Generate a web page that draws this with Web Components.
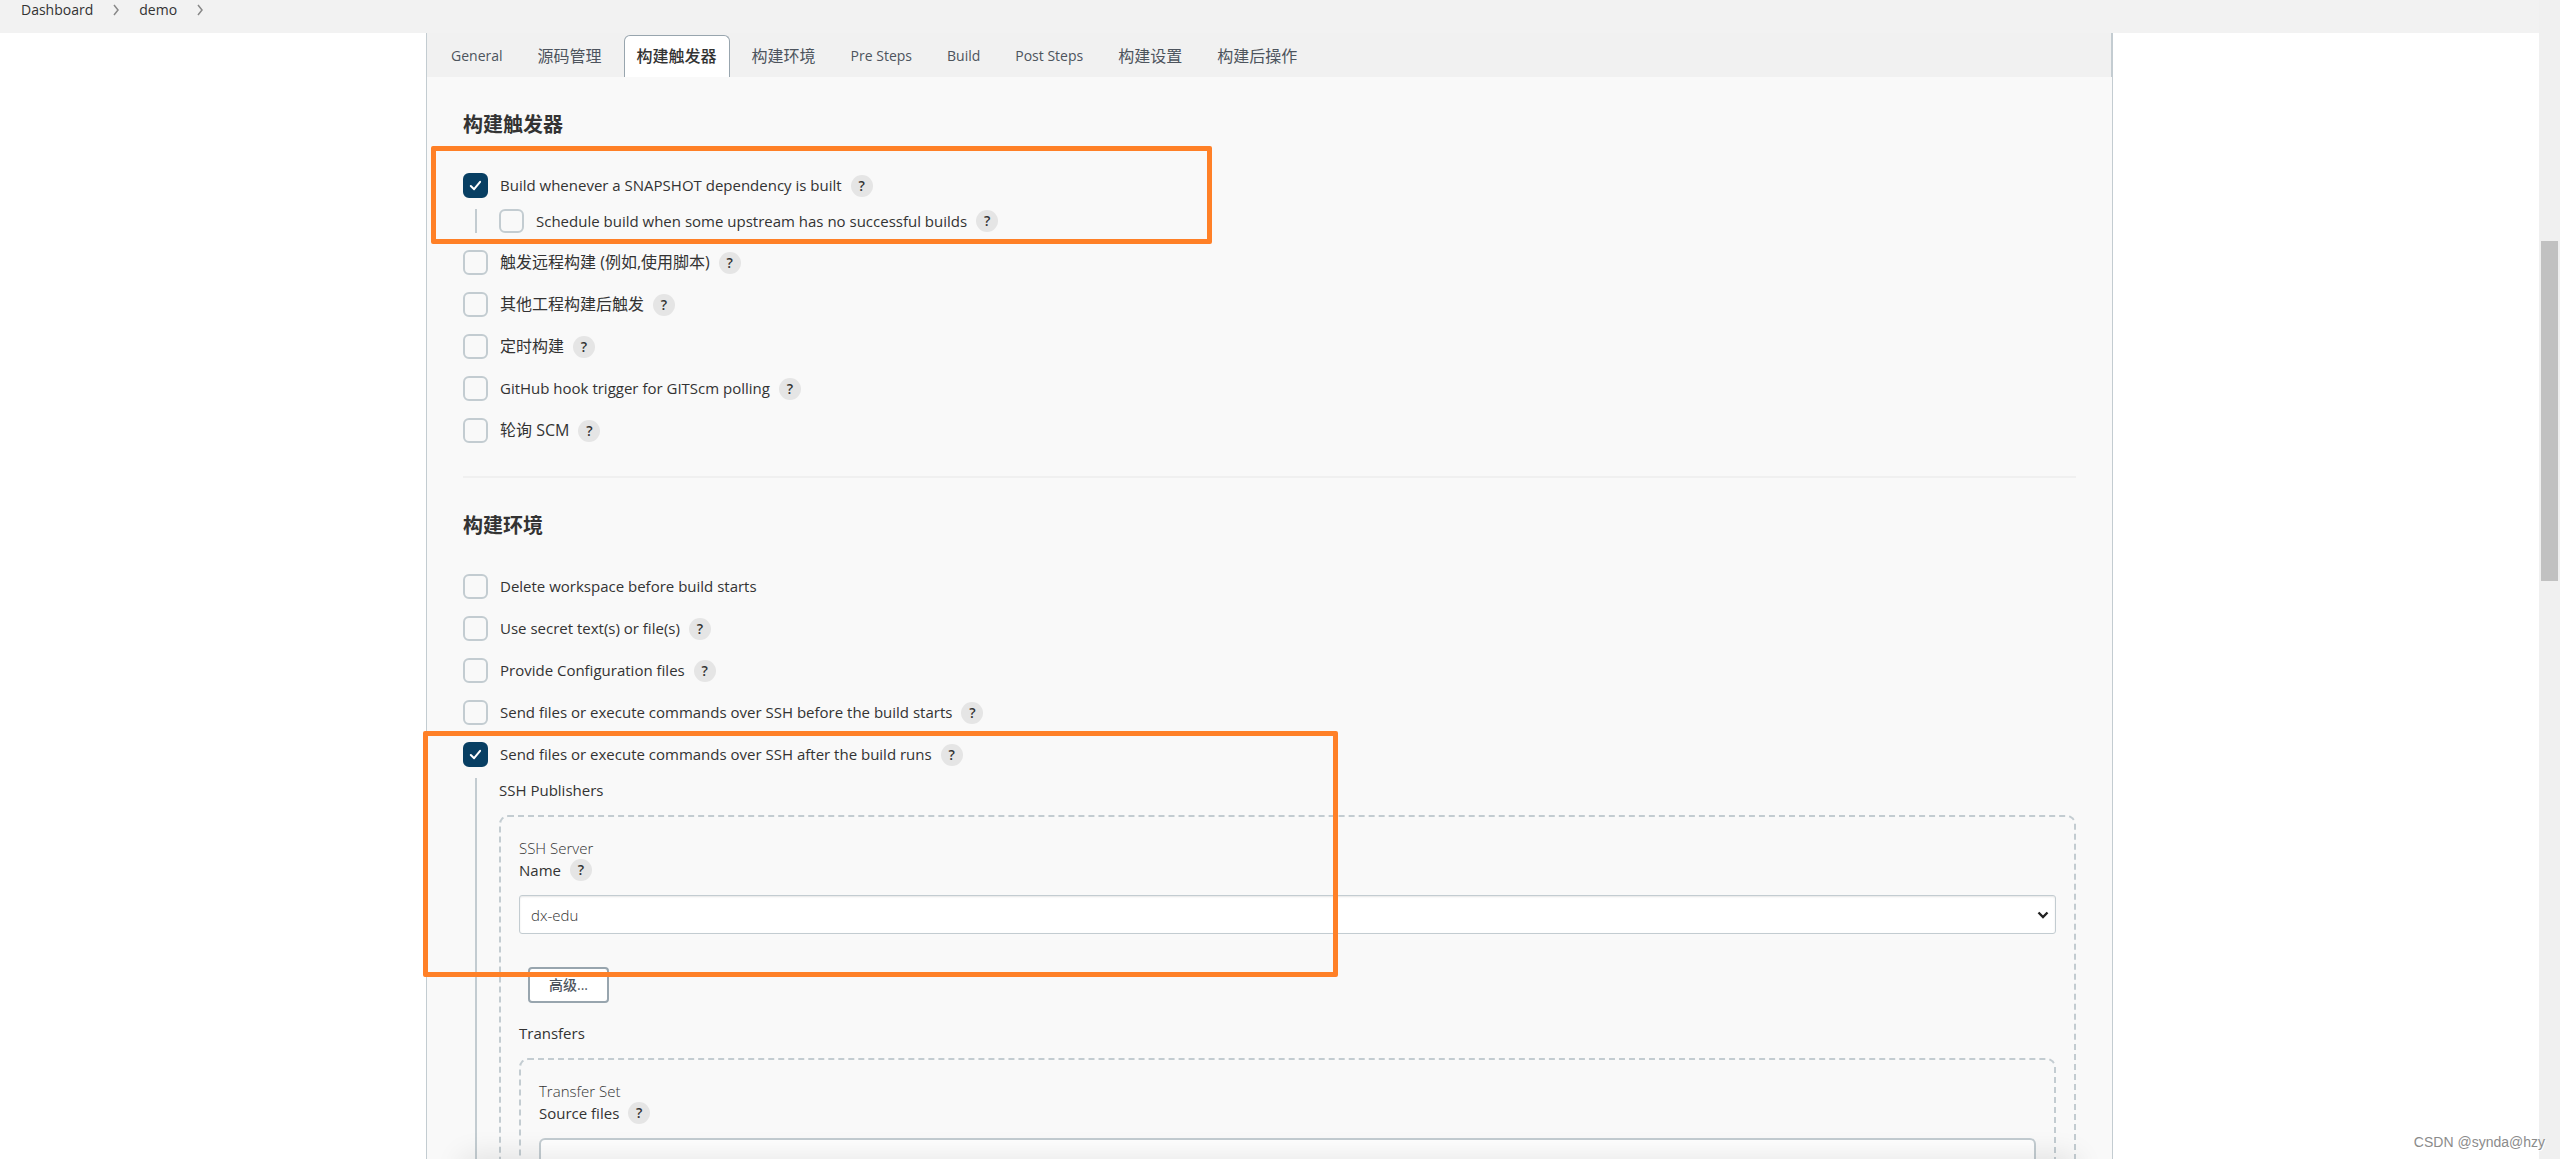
<!DOCTYPE html>
<html lang="zh-CN">
<head>
<meta charset="utf-8">
<title>demo Config [Jenkins]</title>
<style>
  html, body { margin: 0; height: 100%; overflow: hidden; background: #fff; }
  body {
    font-family: "Open Sans", "Noto Sans CJK SC", sans-serif;
    font-size: 15px;
    color: #333;
    --line: #c3ccd1;
    --edge: #98a5ae;
  }
</style>
</head>
<body>
<jk-app>
  <jk-breadcrumbs slot="top"></jk-breadcrumbs>
  <jk-config>
    <jk-tabs slot="tabs"></jk-tabs>
    <jk-section heading="构建触发器">
      <jk-check checked help>Build whenever a SNAPSHOT dependency is built
        <jk-check slot="nested" help>Schedule build when some upstream has no successful builds</jk-check>
      </jk-check>
      <jk-check help cjk>触发远程构建 (例如,使用脚本)</jk-check>
      <jk-check help cjk>其他工程构建后触发</jk-check>
      <jk-check help cjk>定时构建</jk-check>
      <jk-check help>GitHub hook trigger for GITScm polling</jk-check>
      <jk-check help cjk>轮询 SCM</jk-check>
    </jk-section>
    <jk-section heading="构建环境">
      <jk-check>Delete workspace before build starts</jk-check>
      <jk-check help>Use secret text(s) or file(s)</jk-check>
      <jk-check help>Provide Configuration files</jk-check>
      <jk-check help>Send files or execute commands over SSH before the build starts</jk-check>
      <jk-check checked help>Send files or execute commands over SSH after the build runs
        <jk-group slot="nested" label="SSH Publishers" item="SSH Server">
          <jk-select label="Name" value="dx-edu"></jk-select>
          <jk-button>高级...</jk-button>
          <jk-group label="Transfers" item="Transfer Set">
            <jk-text label="Source files"></jk-text>
          </jk-group>
        </jk-group>
      </jk-check>
    </jk-section>
  </jk-config>
  <jk-scrollbar slot="scroll"></jk-scrollbar>
  <jk-marks slot="marks"></jk-marks>
</jk-app>

<script>
const define = (name, render) => customElements.define(name, class extends HTMLElement {
  connectedCallback() {
    if (this.shadowRoot) return;
    this.attachShadow({ mode: 'open' }).innerHTML = render(this);
  }
});

define('jk-help', () => `
  <style>
    :host { display: block; flex: none; }
    button { display: grid; place-items: center; width: 22px; height: 22px; padding: 0; border: 0;
      border-radius: 50%; background: #e5e5e5; color: #333; font: 600 14px/22px "Open Sans", sans-serif; }
  </style>
  <button type="button" aria-label="help">?</button>`);

define('jk-app', () => `
  <style>
    :host { display: grid; grid-template-columns: minmax(0, 1fr) 21px; height: 100vh; position: relative; overflow: hidden; }
    main { overflow: hidden; min-height: 0; }
  </style>
  <main><slot name="top"></slot><slot></slot></main>
  <slot name="scroll"></slot>
  <slot name="marks"></slot>`);

define('jk-breadcrumbs', () => `
  <style>
    :host { display: block; background: #f2f2f2; }
    nav { display: flex; align-items: center; gap: 20px; height: 20px; padding: 0 21px 13px; font-size: 14px; line-height: 20px; }
    a { color: #333; text-decoration: none; font-weight: 500; }
    svg { width: 6px; height: 12px; fill: none; stroke: #888; stroke-width: 1.5; }
  </style>
  <nav>
    <a href="#dashboard">Dashboard</a><svg viewBox="0 0 6 12"><path d="M1 1l4 5-4 5"/></svg>
    <a href="#demo">demo</a><svg viewBox="0 0 6 12"><path d="M1 1l4 5-4 5"/></svg>
  </nav>`);

define('jk-config', () => `
  <style>
    :host { display: grid; grid-template-columns: minmax(0, 1fr) minmax(0, 1687px) minmax(0, 1fr); }
    form { grid-column: 2; margin: 0; background: #f9f9f9; border: solid var(--line); border-width: 0 1px; }
    .body { padding: 34px 36px; }
  </style>
  <form><slot name="tabs"></slot><div class="body"><slot></slot></div></form>`);

const tabs = ['General', '源码管理', '构建触发器', '构建环境', 'Pre Steps', 'Build', 'Post Steps', '构建设置', '构建后操作'];
define('jk-tabs', () => `
  <style>
    :host { display: block; background: #f1f1f1; border-right: 1px solid var(--line); }
    nav { display: flex; align-items: flex-end; gap: 9px; height: 44px; padding-left: 11px; }
    a { box-sizing: border-box; height: 42px; padding: 0 12px; border: 1px solid transparent; border-bottom: 0;
      border-radius: 6px 6px 0 0; color: #4d545d; font-size: 14px; line-height: 40px; text-decoration: none; white-space: nowrap; }
    a.cjk { font-size: 16px; }
    a[aria-current] { background: #fff; border-color: var(--edge); color: #333; font-weight: 500; }
  </style>
  <nav>${tabs.map((t, i) => `<a href="#tab${i}" class="${/[a-z]/.test(t) ? '' : 'cjk'}"${i === 2 ? ' aria-current="page"' : ''}>${t}</a>`).join('')}</nav>`);

define('jk-section', el => `
  <style>
    :host { display: block; }
    :host(:not(:first-of-type)) { margin-top: 33px; border-top: 2px solid #f0f0f0; padding-top: 34px; }
    h2 { margin: 0 0 34px; font-size: 20px; line-height: 28px; font-weight: 700; }
    .rows { display: flex; flex-direction: column; gap: 17px; }
  </style>
  <h2>${el.getAttribute('heading')}</h2>
  <div class="rows"><slot></slot></div>`);

define('jk-check', el => `
  <style>
    :host { display: block; --h: 25px; }
    :host([slot=nested]) { --h: 24px; }
    .row { display: flex; align-items: center; gap: 9px; height: var(--h); }
    label { display: flex; align-items: center; gap: 12px; font-size: 15px; line-height: var(--h); font-weight: 500; white-space: nowrap; }
    :host([cjk]) label { font-size: 16px; font-weight: 400; }
    .box { display: grid; }
    .box > * { grid-area: 1 / 1; }
    input { appearance: none; box-sizing: border-box; width: 25px; height: var(--h); margin: 0;
      border: 2px solid var(--line); border-radius: 6px; }
    input:checked { background: #083f63; border-color: #083f63; }
    svg { width: 25px; height: var(--h); fill: none; stroke: #fff; stroke-width: 2; stroke-linecap: round; stroke-linejoin: round; pointer-events: none; }
    input:not(:checked) + svg { visibility: hidden; }
    .nested { margin: 11px 0 0 12px; padding-left: 22px; border-left: 2px solid var(--line); }
  </style>
  <div class="row">
    <label><span class="box"><input type="checkbox"${el.hasAttribute('checked') ? ' checked' : ''}><svg viewBox="0 0 25 25"><path d="M7.800 13l3.300 3.200 6-7.400"/></svg></span><span><slot></slot></span></label>
    ${el.hasAttribute('help') ? '<jk-help></jk-help>' : ''}
  </div>
  ${el.querySelector(':scope > [slot=nested]') ? '<div class="nested"><slot name="nested"></slot></div>' : ''}`);

define('jk-group', el => `
  <style>
    :host { display: block; white-space: normal; }
    .label { font-size: 15px; line-height: 25px; font-weight: 500; }
    .box { margin-top: 12px; padding: 20px 18px; border: 2px dashed var(--line); border-radius: 9px; }
    .item { font-size: 15px; line-height: 22px; font-weight: 300; }
  </style>
  <div class="label">${el.getAttribute('label')}</div>
  <div class="box"><div class="item">${el.getAttribute('item')}</div><slot></slot></div>`);

const fieldHead = `
    :host { display: block; }
    .head { display: flex; align-items: center; gap: 9px; height: 22px; margin-bottom: 14px; }
    label { font-size: 15px; line-height: 22px; font-weight: 500; }`;

define('jk-select', el => `
  <style>${fieldHead}
    .wrap { display: grid; align-items: center; }
    .wrap > * { grid-area: 1 / 1; }
    select { appearance: none; box-sizing: border-box; width: 100%; height: 39px; padding: 0 11px; border: 1px solid var(--line);
      border-radius: 3px; background: #fff; box-shadow: inset 0 1px 2px rgba(0,0,0,.1); color: #333; font: 300 15px/22px "Open Sans", sans-serif; }
    svg { justify-self: end; width: 12px; height: 8px; margin-right: 7px; fill: none; stroke: #222; stroke-width: 2.4; pointer-events: none; }
  </style>
  <div class="head"><label for="f">${el.getAttribute('label')}</label><jk-help></jk-help></div>
  <div class="wrap"><select id="f"><option>${el.getAttribute('value')}</option></select><svg viewBox="0 0 12 8"><path d="M1.500 1.500L6 6l4.500-4.500"/></svg></div>`);

define('jk-text', el => `
  <style>${fieldHead}
    input { display: block; box-sizing: border-box; width: 100%; height: 39px; padding: 0 11px; border: 2px solid var(--line); border-radius: 6px;
      background: #fff; font: 400 15px/22px "Open Sans", sans-serif; }
  </style>
  <div class="head"><label for="f">${el.getAttribute('label')}</label><jk-help></jk-help></div>
  <input id="f" type="text">`);

define('jk-button', () => `
  <style>
    :host { display: block; margin: 33px 0 18px 9px; }
    button { box-sizing: border-box; height: 36px; padding: 0 19px; border: 2px solid var(--edge); border-radius: 4px; background: #fff;
      color: #4d545d; font: 500 14px/32px "Open Sans", "Noto Sans CJK SC", sans-serif; }
  </style>
  <button type="button"><slot></slot></button>`);

define('jk-scrollbar', () => `
  <style>
    :host { display: grid; grid-template-rows: 241fr 340fr 578fr; background: #f0f0f0; }
    i { grid-row: 2; margin: 0 2px; background: #c1c1c1; }
  </style>
  <i></i>`);

/* Annotation frames, the shade of the sticky footer and the watermark lie over the page. */
define('jk-marks', () => `
  <style>
    :host { position: absolute; inset: 0; overflow: hidden; pointer-events: none; }
    div { position: absolute; box-sizing: border-box; border: 5px solid #ff8027; border-radius: 2px; }
    .a { left: 431px; top: 146px; width: 781px; height: 98px; }
    .b { left: 423px; top: 731px; width: 915px; height: 246px; }
    .shade { border: 0; left: 463px; right: 484px; top: 100%; height: 20px; box-shadow: 0 0 30px rgba(0,0,0,.14); }
    span { position: absolute; right: 15px; bottom: 7px; font: 14px/20px "Liberation Sans", sans-serif; color: #8b8b8b; text-shadow: 1px 1px 0 #fff; }
  </style>
  <div class="shade"></div><div class="a"></div><div class="b"></div><span>CSDN @synda@hzy</span>`);
</script>
</body>
</html>
